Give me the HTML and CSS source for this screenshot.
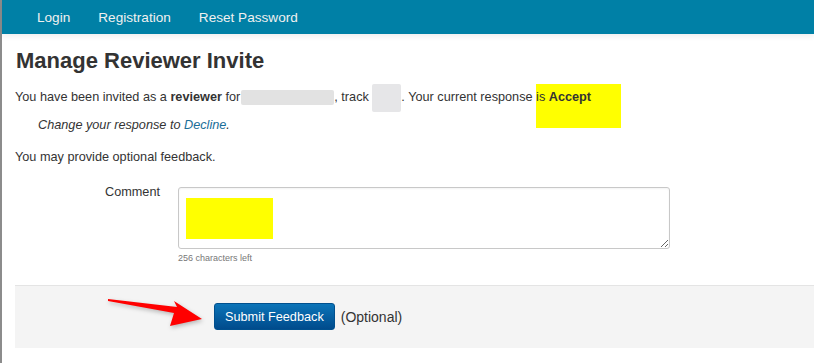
FILE: index.html
```html
<!DOCTYPE html>
<html lang="en">
<head>
    <meta charset="UTF-8">
    <meta name="viewport" content="width=device-width, initial-scale=1.0">
    <title>Manage Reviewer Invite</title>
    <link rel="stylesheet" href="styles.css">
</head>
<body>
<div class="page">
    <nav class="topnav">
        <a href="#">Login</a>
        <a href="#">Registration</a>
        <a href="#">Reset Password</a>
    </nav>

    <main class="content">
        <h1>Manage Reviewer Invite</h1>

        <p class="invite">You have been invited as a <strong>reviewer</strong> for<span class="redact redact-conf"></span>, track <span class="redact redact-track"></span>. Your current response <span class="mark">is <strong>Accept</strong></span>.</p>
        <p class="change"><em>Change your response to <a href="#">Decline</a>.</em></p>
        <p class="note">You may provide optional feedback.</p>

        <div class="form-row">
            <label class="form-label" for="comment">Comment</label>
            <div class="form-field">
                <div class="textarea-wrap">
                    <textarea id="comment"></textarea>
                    <span class="textarea-mark"></span>
                </div>
                <div class="chars-left">256 characters left</div>
            </div>
        </div>

        <div class="form-actions">
            <svg class="arrow" width="110" height="40" viewBox="0 0 110 40">
                <polygon points="0,4 69,12 66,6 94,24 62,31 66,18 0,6" fill="#ff0000"/>
            </svg>
            <button class="btn-primary">Submit Feedback</button>
            <span class="optional">(Optional)</span>
        </div>
    </main>
</div>
</body>
</html>
```

FILE: styles.css
```css
body {
    margin: 0;
    font-family: "Liberation Sans", Arial, sans-serif;
    color: #333;
    background: #fff;
}
.page {
    min-height: 100vh;
    border-left: 2px solid #8c8c8c;
}
.topnav {
    height: 34px;
    background-color: #0080a6;
    display: flex;
    align-items: center;
    padding-left: 21px;
    box-shadow: 0 2px 6px rgba(0, 0, 0, 0.08);
}
.topnav a {
    color: #f0f0f0;
    text-decoration: none;
    font-size: 13.6px;
    padding: 0 14px;
}
.content {
    padding: 14px 0 0 13px;
}
h1 {
    font-size: 22px;
    margin: 0 0 0 1px;
    line-height: 26px;
}
p {
    font-size: 12.7px;
    margin: 0;
    line-height: 18px;
}
.invite {
    margin-top: 14px;
}
.redact {
    display: inline-block;
    background: #e2e2e2;
    border-radius: 2px;
    vertical-align: middle;
}
.redact-conf {
    width: 93px;
    height: 15px;
    margin-left: 1px;
}
.redact-track {
    width: 29px;
    height: 28px;
    margin: -7px 0;
    background: #e6e6e8;
}
.mark {
    position: relative;
    z-index: 0;
}
.mark::before {
    content: "";
    position: absolute;
    left: 0;
    top: -6px;
    width: 85px;
    height: 44px;
    background: #ffff00;
    z-index: -1;
}
.change {
    margin-top: 10px;
    padding-left: 23px;
}
.change a {
    color: #1a6e98;
    text-decoration: none;
}
.note {
    margin-top: 14px;
}
.form-row {
    display: flex;
    margin-top: 18px;
}
.form-label {
    width: 145px;
    text-align: right;
    font-size: 12.7px;
    line-height: 16px;
    margin-right: 18px;
}
.textarea-wrap {
    position: relative;
    margin-top: 3px;
}
textarea {
    display: block;
    width: 492px;
    height: 62px;
    box-sizing: border-box;
    border: 1px solid #c8c8c8;
    border-radius: 3px;
    box-shadow: inset 0 1px 2px rgba(0, 0, 0, 0.05);
    margin: 0;
}
.textarea-mark {
    position: absolute;
    left: 8px;
    top: 11px;
    width: 87px;
    height: 41px;
    background: #ffff00;
}
.chars-left {
    font-size: 9px;
    color: #777;
    margin-top: 4px;
}
.form-actions {
    position: relative;
    margin-top: 22px;
    background: #f4f4f4;
    border-top: 1px solid #e4e4e4;
    padding: 17px 0 18px 199px;
    display: flex;
    align-items: center;
}
.arrow {
    position: absolute;
    left: 93px;
    top: 9px;
    filter: drop-shadow(1px 2px 2px rgba(0, 0, 0, 0.25));
}
.btn-primary {
    height: 27px;
    padding: 0 10px;
    font-family: inherit;
    font-size: 12.7px;
    color: #fff;
    background: linear-gradient(#0b74b8, #004b8c);
    border: 1px solid #00508e;
    border-radius: 3px;
    cursor: pointer;
}
.optional {
    font-size: 14px;
    margin-left: 6px;
}
```
